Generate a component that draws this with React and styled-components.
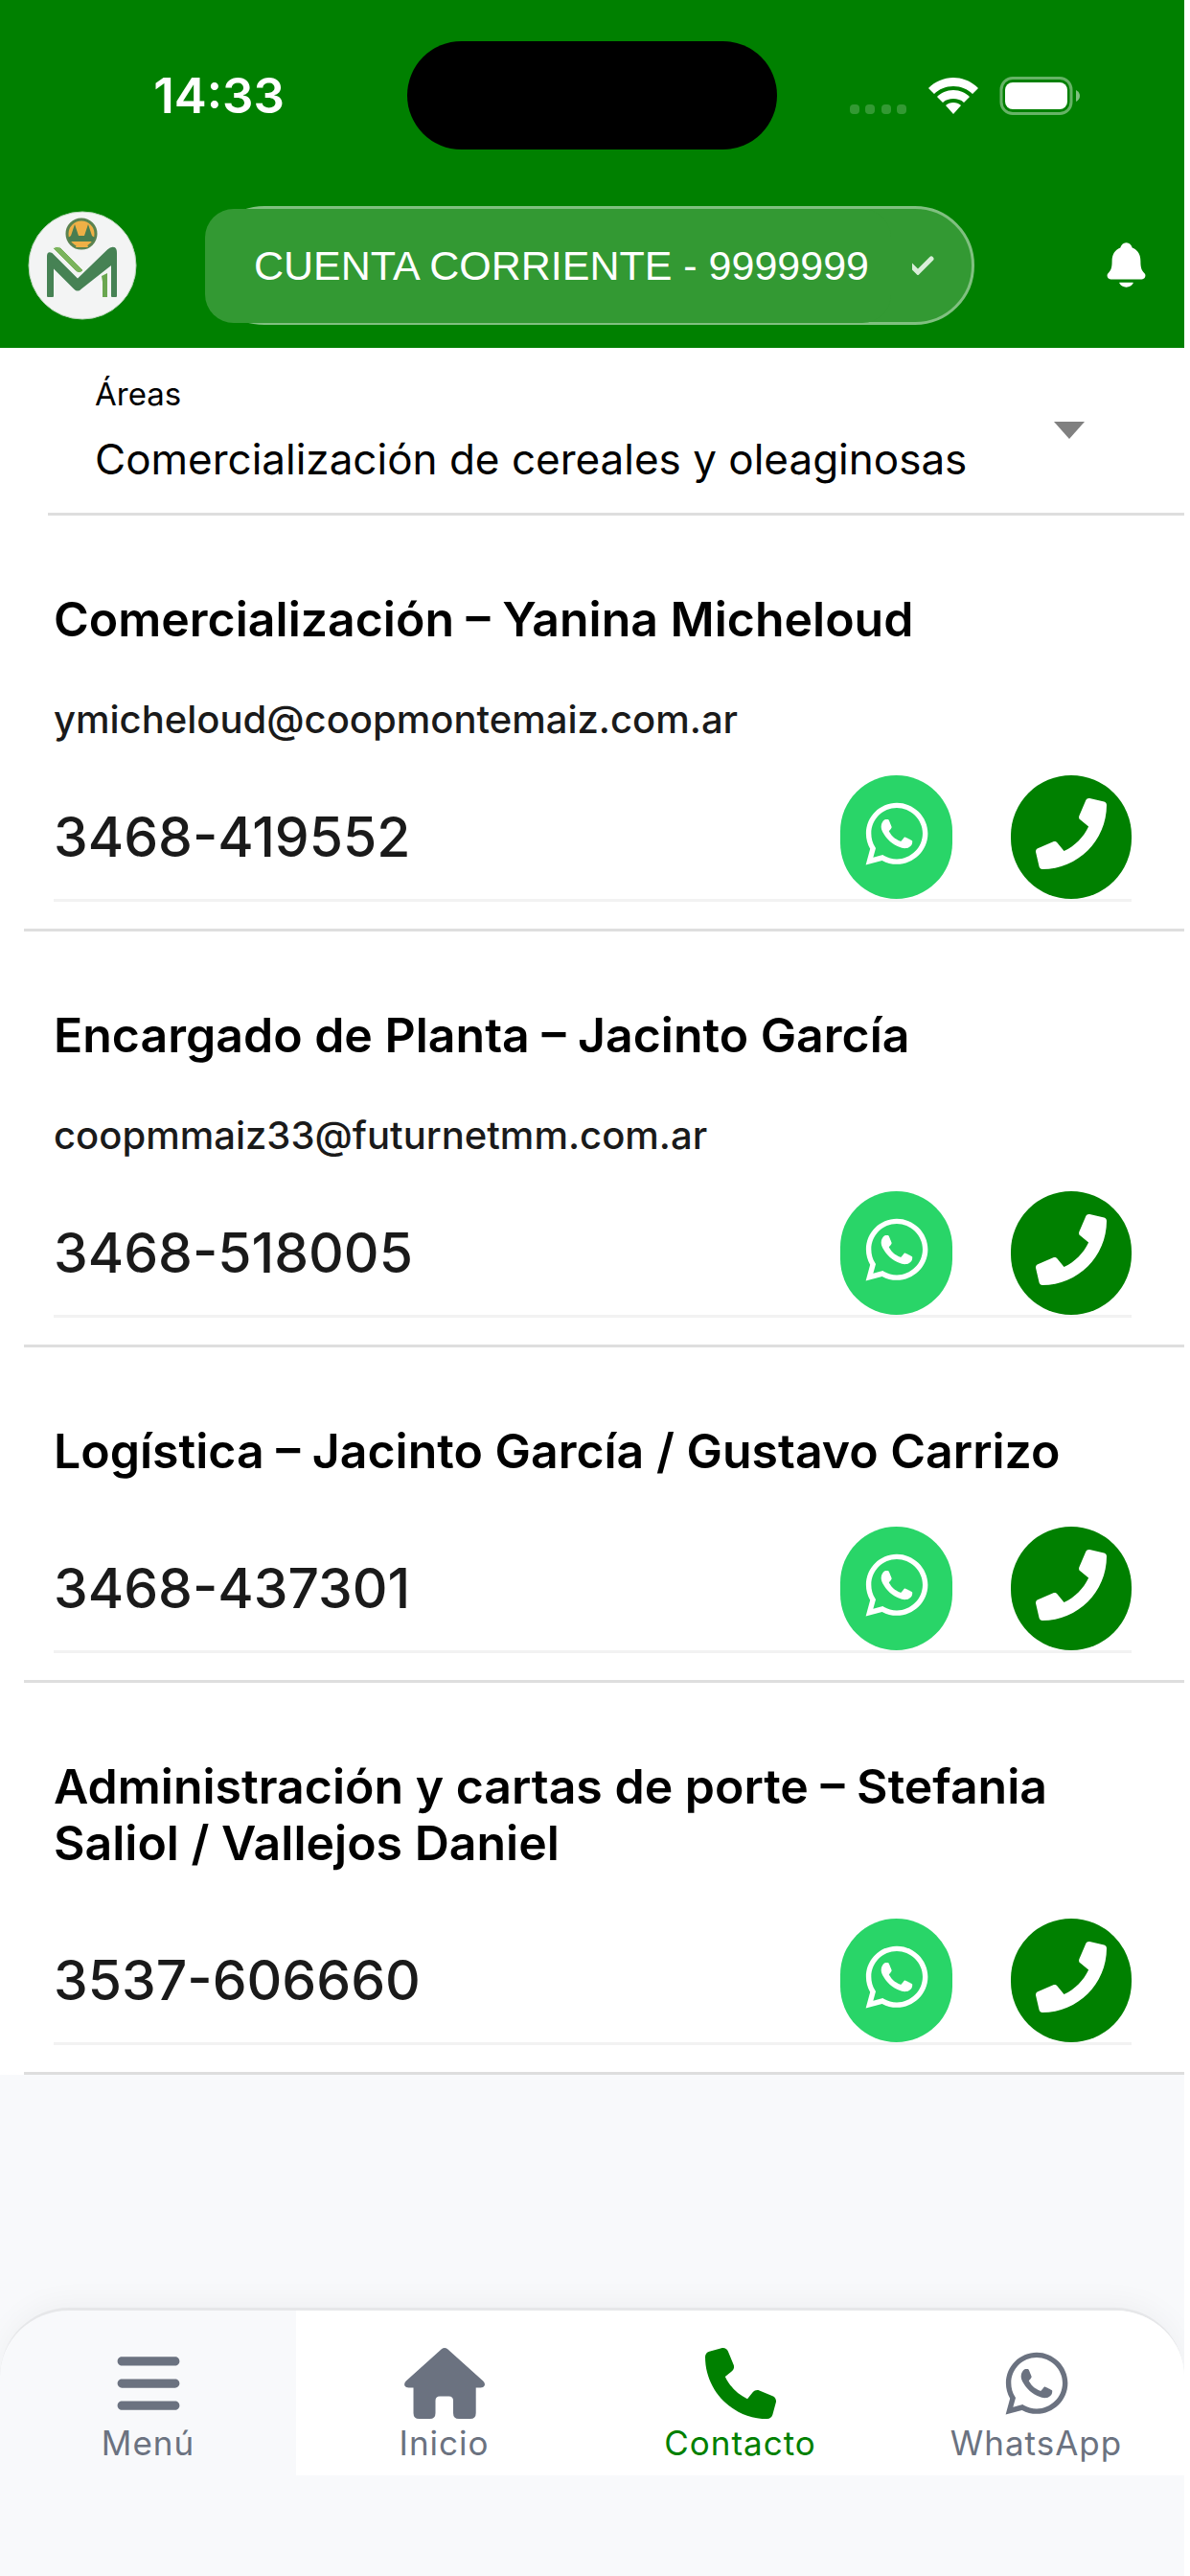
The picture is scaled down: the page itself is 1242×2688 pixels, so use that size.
import React from 'react';
import styled, { createGlobalStyle } from 'styled-components';
import { FaBars, FaPhone, FaWhatsapp } from 'react-icons/fa6';
import { FaPhone as FaHandset } from 'react-icons/fa';
import { IoNotifications } from 'react-icons/io5';

const GREEN = '#008000';
const FONT = "Inter, 'Liberation Sans', sans-serif";

const GlobalStyle = createGlobalStyle`
  *, *::before, *::after { box-sizing: border-box; }
  body { margin: 0; background: #fff; }
`;

const Page = styled.div`
  display: flex;
  flex-direction: column;
  min-height: 100vh;
  margin-right: 6px;
  overflow: hidden;
  background: #f8f9fb;
  color: #000;
  font-family: ${FONT};
`;

const TopArea = styled.header`
  background: ${GREEN};
  color: #fff;
`;

const StatusBar = styled.div`
  display: grid;
  grid-template-columns: 1fr 386px 1fr;
  align-items: center;
  padding-top: 43px;
`;

const Clock = styled.time`
  padding-left: 32px;
  text-align: center;
  font-size: 51px;
  line-height: 60px;
  font-weight: 600;
`;

const Island = styled.div`
  height: 113px;
  border-radius: 57px;
  background: #000;
`;

const StatusIcons = styled.div`
  display: flex;
  justify-content: flex-end;
  padding-right: 105px;
`;

const Toolbar = styled.div`
  display: grid;
  grid-template-columns: 214px 1fr 121px;
  align-items: center;
  height: 207px;
  padding-top: 34px;
`;

const LogoLink = styled.a`
  display: flex;
  padding-left: 28px;
`;

const AccountPicker = styled.div`
  position: relative;
  display: flex;
  align-items: center;
  max-width: 803px;
  height: 124px;
  padding-right: 38px;
  border: 3px solid #80c080;
  border-radius: 62px;
  background: #339933;

  &::before {
    content: '';
    position: absolute;
    inset: 0 84px -1px -3px;
    border-radius: 30px;
    background: #339933;
  }
`;

const AccountSelect = styled.select`
  position: relative;
  flex: 1;
  min-width: 0;
  height: 100%;
  padding: 0 0 0 48px;
  border: 0;
  background: none;
  appearance: none;
  color: #fff;
  font-family: 'Liberation Sans', Arial, sans-serif;
  font-size: 43px;
`;

const BellButton = styled.button`
  display: flex;
  justify-self: center;
  padding: 0;
  border: 0;
  background: none;
  color: #fff;
`;

const Content = styled.main`
  background: #fff;
`;

const AreaField = styled.div`
  position: relative;
  margin-left: 50px;
  padding: 25px 0 0 49px;
  border-bottom: 3px solid #dedede;
`;

const AreaLabel = styled.label`
  display: block;
  font-size: 33px;
  line-height: 46px;
`;

const AreaSelect = styled.select`
  display: block;
  width: 100%;
  height: 101px;
  padding: 0 0 12px;
  border: 0;
  background: none;
  appearance: none;
  color: #000;
  font-family: ${FONT};
  font-size: 44px;
`;

const Caret = styled.span`
  position: absolute;
  top: 77px;
  right: 104px;
  border: 16px solid transparent;
  border-top: 18px solid #808080;
  border-bottom: 0;
  pointer-events: none;
`;

const Contacts = styled.ul`
  margin: 0;
  padding: 0;
  list-style: none;
`;

const Contact = styled.li`
  margin-left: 25px;
  padding: 79px 55px 28px 31px;
  border-bottom: 3px solid #dedede;
`;

const Name = styled.h2`
  margin: 0;
  font-size: 50px;
  line-height: 59px;
  font-weight: 600;
`;

const Email = styled.a`
  display: block;
  margin-top: 51px;
  color: #1a1a1a;
  font-size: 40px;
  line-height: 48px;
  font-weight: 500;
  text-decoration: none;
`;

const PhoneRow = styled.div`
  display: flex;
  align-items: center;
  margin-top: ${(p) => (p.$tight ? '34px' : '49px')};
  border-bottom: 3px solid #f2f2f2;
`;

const PhoneNumber = styled.span`
  flex: 1;
  color: #1a1a1a;
  font-size: 57px;
  line-height: 70px;
  font-weight: 500;
`;

const RoundLink = styled.a`
  display: flex;
  align-items: center;
  justify-content: center;
  width: ${(p) => p.$width};
  height: 129px;
  margin-left: 61px;
  padding-bottom: 8px;
  border-radius: 63px;
  background: ${(p) => p.$color};
  color: #fff;
`;

const TabBar = styled.nav`
  display: grid;
  grid-template-columns: repeat(4, 1fr);
  align-items: start;
  height: 280px;
  margin-top: auto;
  border-top: 3px solid #e6e7e9;
  border-radius: 72px 72px 0 0;
  overflow: hidden;
  background: #f8f9fb;
  box-shadow: 0 -6px 30px rgba(0, 0, 0, 0.04);
`;

const Tab = styled.a`
  display: flex;
  flex-direction: column;
  align-items: center;
  height: 172px;
  padding-top: 38px;
  background: ${(p) => (p.$plain ? 'transparent' : '#fff')};
  color: ${(p) => (p.$active ? GREEN : '#6b7280')};
  font-size: 35px;
  line-height: 44px;
  letter-spacing: 1px;
  text-decoration: none;
`;

const TabIcon = styled.span`
  display: flex;
  align-items: center;
  height: 76px;
  margin-bottom: 2px;

  svg {
    width: auto;
    height: 74px;
  }
`;

const StatusGlyphs = () => (
  <svg width="244" height="40" viewBox="0 0 244 40" fill="#fff" aria-hidden="true">
    <g opacity="0.2">
      {[0, 16, 33, 49].map((x) => (
        <rect key={x} x={x} y="29" width="10" height="10" rx="4" />
      ))}
    </g>
    <path d="M108 1c10 0 19 4 26 11l-6 6c-5-5-12-8-20-8s-15 3-20 8l-6-6c7-7 16-11 26-11z" />
    <path d="M108 14c7 0 13 3 17 7l-6 6c-3-3-7-4-11-4s-8 1-11 4l-6-6c4-4 10-7 17-7z" />
    <path d="M108 27c3 0 6 1 8 3l-8 9-8-9c2-2 5-3 8-3z" />
    <rect x="158" y="1.5" width="73" height="37" rx="12" fill="none" stroke="#fff" strokeWidth="3" opacity="0.4" />
    <rect x="162" y="6" width="65" height="28" rx="8" />
    <path d="M236 14q4 2 4 6t-4 6z" opacity="0.5" />
  </svg>
);

const Logo = () => (
  <svg width="116" height="116" viewBox="0 0 116 116" aria-hidden="true">
    <circle cx="58" cy="58" r="56" fill="#f3f4f4" stroke="#b9d6b9" strokeWidth="1" />
    <circle cx="57" cy="25" r="15" fill="#efb046" stroke="#5b8350" strokeWidth="3" />
    <path d="M43 29l3-2 4-12 4 12h6l4-12 4 12 3 2-2 4H45z" fill="#4a7d50" />
    <path d="M53 33h9l2 6H51z" fill="#efb046" />
    <path
      d="M22 90V48q0-4 4-2l27 27 32-31q3-3 6-2 2 1 2 5v45h-4V56L56 82q-3 3-6 0L27 59v31z"
      fill="#468254"
      stroke="#468254"
      strokeWidth="2"
      strokeLinejoin="round"
    />
    <path d="M27 40q4-3 8-1l24 24q-4 5-8 1z" fill="#7ab35c" stroke="#f3f4f4" strokeWidth="1" />
    <path d="M78 69l6-3v25h-5V75z" fill="#6aa650" />
  </svg>
);

const HouseIcon = () => (
  <svg width="84" height="74" viewBox="0 0 84 74" fill="currentColor" aria-hidden="true">
    <path d="M38.8 1.3q3.2-2.6 6.4 0l37 33.2q2.6 2.6 1.4 5-1 2-4 2h-4.9V68q0 6-6 6H57q-6 0-6-6V55q0-4.500-4.500-4.500h-9.500q-4.500 0-4.500 4.500v13q0 6-6 6H15.500q-6 0-6-6V41.500H4.500q-3 0-4.100-2-1-2.400 1.400-5z" />
  </svg>
);

const CheckMark = () => (
  <svg width="24" height="20" viewBox="0 0 24 20" aria-hidden="true">
    <path d="M-2 9l8 8L20 3" fill="none" stroke="#d9eed9" strokeWidth="5" strokeLinecap="round" />
  </svg>
);

const contacts = [
  { name: 'Comercialización – Yanina Micheloud', email: 'ymicheloud@coopmontemaiz.com.ar', phone: '3468-419552' },
  { name: 'Encargado de Planta – Jacinto García', email: 'coopmmaiz33@futurnetmm.com.ar', phone: '3468-518005' },
  { name: 'Logística – Jacinto García / Gustavo Carrizo', phone: '3468-437301' },
  { name: 'Administración y cartas de porte – Stefania Saliol / Vallejos Daniel', phone: '3537-606660' },
];

export default function App() {
  return (
    <Page>
      <GlobalStyle />
      <TopArea>
        <StatusBar>
          <Clock>14:33</Clock>
          <Island />
          <StatusIcons><StatusGlyphs /></StatusIcons>
        </StatusBar>
        <Toolbar>
          <LogoLink href="#inicio" aria-label="Inicio"><Logo /></LogoLink>
          <AccountPicker>
            <AccountSelect aria-label="Cuenta" defaultValue="cc">
              <option value="cc">CUENTA CORRIENTE - 9999999</option>
            </AccountSelect>
            <CheckMark />
          </AccountPicker>
          <BellButton type="button" aria-label="Notificaciones"><IoNotifications size={53} /></BellButton>
        </Toolbar>
      </TopArea>
      <Content>
        <AreaField>
          <AreaLabel htmlFor="area">Áreas</AreaLabel>
          <AreaSelect id="area" defaultValue="cereales">
            <option value="cereales">Comercialización de cereales y oleaginosas</option>
          </AreaSelect>
          <Caret />
        </AreaField>
        <Contacts>
          {contacts.map((c) => (
            <Contact key={c.phone}>
              <Name>{c.name}</Name>
              {c.email && <Email href={`mailto:${c.email}`}>{c.email}</Email>}
              <PhoneRow $tight={Boolean(c.email)}>
                <PhoneNumber>{c.phone}</PhoneNumber>
                <RoundLink href="#whatsapp" aria-label="WhatsApp" $width="117px" $color="#29d568"><FaWhatsapp size={74} /></RoundLink>
                <RoundLink href={`tel:${c.phone}`} aria-label="Llamar" $width="126px" $color={GREEN}><FaHandset size={74} /></RoundLink>
              </PhoneRow>
            </Contact>
          ))}
        </Contacts>
      </Content>
      <TabBar>
        <Tab href="#menu" $plain><TabIcon><FaBars /></TabIcon>Menú</Tab>
        <Tab href="#inicio"><TabIcon><HouseIcon /></TabIcon>Inicio</Tab>
        <Tab href="#contacto" $active><TabIcon><FaPhone /></TabIcon>Contacto</Tab>
        <Tab href="#whatsapp"><TabIcon><FaWhatsapp /></TabIcon>WhatsApp</Tab>
      </TabBar>
    </Page>
  );
}
